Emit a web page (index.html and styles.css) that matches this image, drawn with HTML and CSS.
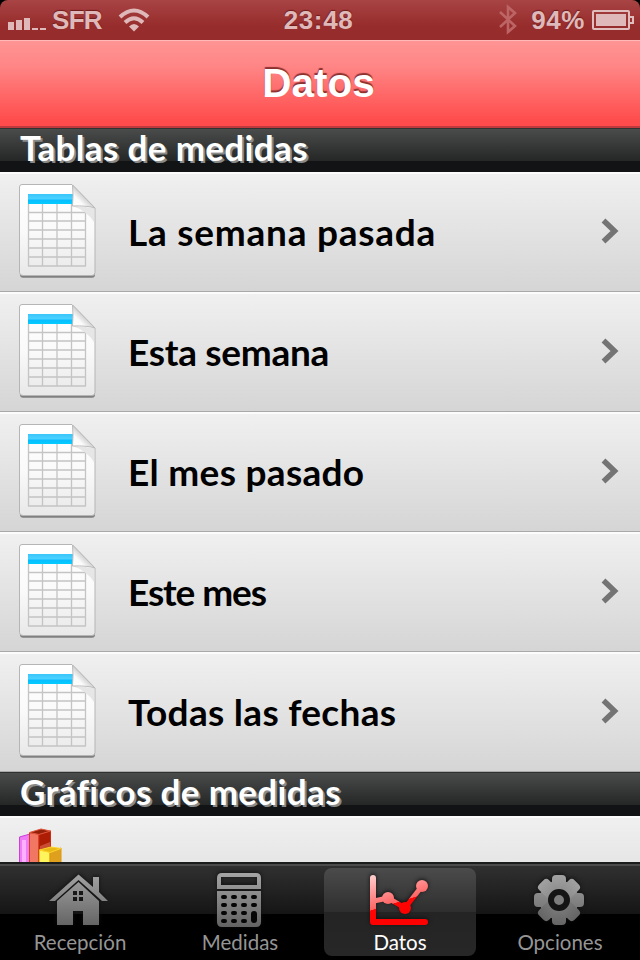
FILE: index.html
```html
<!DOCTYPE html>
<html lang="es">
<head>
    <meta charset="UTF-8">
    <meta name="viewport" content="width=device-width, initial-scale=1.0">
    <title>Datos</title>
    <link rel="stylesheet" href="styles.css">
</head>
<body>

    <!-- Iconos compartidos -->
    <svg class="defs" width="0" height="0">
        <defs>
            <linearGradient id="paper" x1="0" y1="0" x2="0" y2="1">
                <stop offset="0" stop-color="#fff"/>
                <stop offset=".5" stop-color="#fafafa"/>
                <stop offset="1" stop-color="#e8e8e8"/>
            </linearGradient>
            <linearGradient id="fold" x1="0" y1="1" x2="1" y2="0">
                <stop offset="0" stop-color="#fff"/>
                <stop offset=".3" stop-color="#fbfbfb"/>
                <stop offset=".5" stop-color="#d2d2d2"/>
                <stop offset=".6" stop-color="#fff"/>
            </linearGradient>
            <linearGradient id="blue" x1="0" y1="0" x2="0" y2="1">
                <stop offset="0" stop-color="#39c5fb"/>
                <stop offset=".5" stop-color="#4bd2ff"/>
                <stop offset=".6" stop-color="#08bcff"/>
                <stop offset="1" stop-color="#04ccff"/>
            </linearGradient>
            <linearGradient id="gray" gradientUnits="userSpaceOnUse" x1="0" y1="0" x2="0" y2="56">
                <stop offset="0" stop-color="#a4a4a4"/>
                <stop offset="1" stop-color="#606060"/>
            </linearGradient>
            <linearGradient id="red" gradientUnits="userSpaceOnUse" x1="0" y1="0" x2="14" y2="46">
                <stop offset="0" stop-color="#ffd8d8"/>
                <stop offset=".75" stop-color="#ff6464"/>
                <stop offset=".76" stop-color="#ff0505"/>
                <stop offset="1" stop-color="#f00"/>
            </linearGradient>
        </defs>
        <symbol id="sheet" viewBox="0 0 80 98">
            <path d="M4 2H55L77 25V91Q77 94 74 94H5Q2 94 2 91V5Q2 2 4 2Z" fill="#808080" transform="translate(0 .8)"/>
            <path d="M4 1.500H54L77 25V89.500Q77 92.500 74 92.500H5Q1.500 92.500 1.500 89.500V4Q1.500 1.500 4 1.500Z" fill="url(#paper)" stroke="#b5b5b5"/>
            <path d="M10.500 21V83M24.500 21V83M39 21V83M53.500 21V83M67.500 24V83M10 29.500H68M10 38H68M10 47H68M10 56H68M10 65H68M10 74H68M10 83H68" stroke="#c4c4c4" stroke-width="1.300" fill="none"/>
            <rect x="10" y="11" width="45" height="10" fill="url(#blue)"/>
            <path d="M54 23L76 25V39Q68 27 54 23Z" fill="#e6e6e6"/>
            <path d="M54.500 2L77 25Q70 22.500 54.500 23Q55.500 12 54.500 2Z" fill="url(#fold)" stroke="#bbb"/>
        </symbol>
        <symbol id="chevron" viewBox="0 0 18 26">
            <path d="M2.500 2.500L13.500 13L2.500 23.500" fill="none" stroke="#747474" stroke-width="5.500"/>
        </symbol>
    </svg>

    <div class="screen">
        <div class="status-bar">
            <div class="carrier">
                <svg width="40" height="14" viewBox="0 0 40 14" fill="#dfb9b9">
                    <path d="M0 6H6V14H0ZM8 4H14V14H8ZM16 2H22V14H16ZM24 12H30V14H24ZM32 12H38V14H32Z"/>
                </svg>
                <span class="operator">SFR</span>
                <svg class="wifi" width="32" height="24" viewBox="0 0 32 24">
                    <path d="M2 9Q16 -4 30 9M7 14.500Q16 6 25 14.500" fill="none" stroke="#dfb9b9" stroke-width="4"/>
                    <path d="M11 18.500Q16 13.500 21 18.500L16 23.500Z" fill="#dfb9b9"/>
                </svg>
            </div>
            <span class="clock">23:48</span>
            <div class="battery">
                <svg class="bluetooth" width="18" height="32" viewBox="0 0 18 32">
                    <path d="M1 8L16 22L9 28V3L16 9L1 23" fill="none" stroke="#bd6565" stroke-width="2.600"/>
                </svg>
                <span class="percent">94%</span>
                <svg width="42" height="20" viewBox="0 0 42 20">
                    <rect x="1" y="1" width="36" height="18" rx="1" fill="none" stroke="#e1bebe" stroke-width="2"/>
                    <rect x="4" y="4" width="30" height="12" fill="#dfb9b9"/>
                    <path d="M37 7H41V13H37" fill="none" stroke="#e1bebe" stroke-width="2"/>
                </svg>
            </div>
        </div>

        <header class="nav-bar">
            <h1>Datos</h1>
        </header>

        <main>
            <h2>Tablas de medidas</h2>
            <ul>
                <li><svg class="icon"><use href="#sheet"/></svg><span class="label semana-pasada">La semana pasada</span><svg class="arrow"><use href="#chevron"/></svg></li>
                <li><svg class="icon"><use href="#sheet"/></svg><span class="label esta-semana">Esta semana</span><svg class="arrow"><use href="#chevron"/></svg></li>
                <li><svg class="icon"><use href="#sheet"/></svg><span class="label mes-pasado">El mes pasado</span><svg class="arrow"><use href="#chevron"/></svg></li>
                <li><svg class="icon"><use href="#sheet"/></svg><span class="label este-mes">Este mes</span><svg class="arrow"><use href="#chevron"/></svg></li>
                <li><svg class="icon"><use href="#sheet"/></svg><span class="label fechas">Todas las fechas</span><svg class="arrow"><use href="#chevron"/></svg></li>
            </ul>
            <h2>Gráficos de medidas</h2>
            <ul>
                <li>
                    <svg class="icon" viewBox="0 0 80 98">
                        <path d="M1.500 10L12 7V90H1.500Z" fill="#f07cf5" stroke="#cb3ed8"/>
                        <path d="M4 13H8V90H4Z" fill="#fdb0ff"/>
                        <path d="M11.500 6L21 7V90H11.500Z" fill="#f27762" stroke="#d83a20"/>
                        <path d="M21 7L32.500 4V90H21Z" fill="#ad1d05" stroke="#c92c12"/>
                        <path d="M22 19L32 15V24L22 22Z" fill="#c94d33"/>
                        <path d="M11.500 5.500L23 2L32.500 4L21 7.500Z" fill="#942009" stroke="#e1563c"/>
                        <path d="M21.500 23L32 25V90H21.500Z" fill="#fff45c" stroke="#e9bd16"/>
                        <path d="M32 25L43 21V90H32Z" fill="#dfa11d" stroke="#dd980c"/>
                        <path d="M21.500 23L33 20L43 21.500L32 25.500Z" fill="#e9b918" stroke="#ffd52a"/>
                    </svg>
                    <span class="label semana-pasada">La semana pasada</span>
                </li>
            </ul>
        </main>

        <nav class="tab-bar">
            <a class="tab">
                <svg width="60" height="56" viewBox="0 0 60 56" fill="url(#gray)">
                    <path d="M0 28L29.500 1.500L44 14V4H50V19L59 28H53L29.500 7L6 28Z"/>
                    <path fill-rule="evenodd" d="M8 28L29.500 9L50 28V52H34V38H24V52H8ZM24 18V22H28V18ZM30 18V22H34V18ZM24 24V28H28V24ZM30 24V28H34V24Z"/>
                </svg>
                <span>Recepción</span>
            </a>
            <a class="tab">
                <svg width="44" height="56" viewBox="0 0 44 56" fill="url(#gray)">
                    <path fill-rule="evenodd" d="M0 16V5Q0 0 5 0H39Q44 0 44 5V16ZM4 4V12H40V4Z"/>
                    <path d="M0 18H44V49Q44 54 39 54H5Q0 54 0 49Z"/>
                    <path d="M6 24H8M16 24H18M26 24H28M36 24H38M6 32H8M16 32H18M26 32H28M36 32H38M6 40H8M16 40H18M26 40H28M6 48H8M16 48H18M26 48H28" stroke="#060606" stroke-width="4" stroke-linecap="round"/>
                    <path d="M37 41V47" stroke="#060606" stroke-width="6" stroke-linecap="round"/>
                </svg>
                <span>Medidas</span>
            </a>
            <a class="tab active">
                <svg width="60" height="56" viewBox="0 0 60 56">
                    <path d="M4 5V49H56" fill="none" stroke="url(#red)" stroke-width="6" stroke-linecap="round" stroke-linejoin="round"/>
                    <path d="M5 28L19 25L36 35L53 13" fill="none" stroke="url(#red)" stroke-width="5"/>
                    <circle cx="19" cy="25" r="6" fill="url(#red)"/>
                    <circle cx="36" cy="35" r="6" fill="url(#red)"/>
                    <circle cx="53" cy="13" r="6" fill="url(#red)"/>
                </svg>
                <span>Datos</span>
            </a>
            <a class="tab">
                <svg width="50" height="56" viewBox="0 0 50 56">
                    <g fill="url(#gray)">
                        <circle cx="25" cy="27" r="19.500"/>
                        <rect x="18" y="2" width="14" height="50" rx="4"/>
                        <rect x="0" y="20" width="50" height="14" rx="4"/>
                        <rect x="18" y="2" width="14" height="50" rx="4" transform="rotate(45 25 27)"/>
                        <rect x="18" y="2" width="14" height="50" rx="4" transform="rotate(-45 25 27)"/>
                    </g>
                    <circle cx="25" cy="27" r="8" fill="#7d7d7d" stroke="#141414" stroke-width="6"/>
                </svg>
                <span>Opciones</span>
            </a>
        </nav>
    </div>

</body>
</html>
```
FILE: styles.css
```css
body {
    margin: 0;
    background-color: #000;
    font-family: Lato, "Liberation Sans", sans-serif;
}

.defs {
    position: absolute;
}

.screen {
    width: 640px;
    height: 960px;
    display: flex;
    flex-direction: column;
    overflow: hidden;
}

/* Barra de estado */
.status-bar {
    flex: none;
    height: 40px;
    box-sizing: border-box;
    padding: 0 6px 0 8px;
    display: grid;
    grid-template-columns: 1fr auto 1fr;
    align-items: center;
    border-radius: 8px 8px 0 0;
    background: linear-gradient(#a84444, #972c2c 65%, #962c2c);
    color: #dfb9b9;
    font: bold 26px/40px "Liberation Sans", Arial, sans-serif;
    text-shadow: 0 -1px 1px #6d1c1c;
}

.carrier, .battery {
    display: flex;
    align-items: center;
}

.carrier svg:first-child {
    margin-top: 6px;
}

.operator {
    margin-left: 4px;
    letter-spacing: -0.7px;
}

.wifi {
    margin-left: 16px;
}

.clock {
    margin-right: 5px;
    letter-spacing: 0.6px;
}

.battery {
    justify-content: flex-end;
}

.percent {
    margin: 0 7px 0 14px;
    letter-spacing: 0.6px;
}

/* Barra de título */
.nav-bar {
    flex: none;
    height: 88px;
    box-sizing: border-box;
    padding-right: 3px;
    border-top: 1px solid #ffb9b9;
    border-bottom: 2px solid #be3a3c;
    background: linear-gradient(#ff9494, #ff8585 30%, #ff4b4b 95%);
}

h1 {
    margin: 0;
    color: #fff;
    font: bold 40.5px/84px "Liberation Sans", Arial, sans-serif;
    text-align: center;
    text-shadow: 0 -2px 1px #8c3030;
}

main {
    height: 734px;
    flex: none;
    overflow: hidden;
}

h2 {
    margin: 0;
    height: 44px;
    box-sizing: border-box;
    padding-left: 20px;
    border-top: 1px solid #303232;
    background: linear-gradient(#4a4c4c, #242726 32px, #121315 32px);
    color: #fff;
    font-size: 35px;
    font-weight: bold;
    line-height: 36px;
    letter-spacing: 0.35px;
    white-space: nowrap;
    text-shadow: 2px 2px 0 #898a8a;
}

ul {
    margin: 0;
    padding: 0;
    list-style: none;
}

li {
    height: 120px;
    box-sizing: border-box;
    padding: 0 20px 2px 18px;
    display: flex;
    align-items: center;
    border-top: 2px solid #fcfcfc;
    border-bottom: 1px solid #a9a9a9;
    background: linear-gradient(#f0f0f0, #d5d5d5);
}

.icon {
    width: 80px;
    height: 98px;
    flex: none;
}

.label {
    flex: 1;
    margin-left: 30px;
    color: #000;
    font-size: 37px;
    font-weight: bold;
    line-height: 50px;
    white-space: nowrap;
}

.semana-pasada {
    letter-spacing: 0.75px;
}

.esta-semana {
    letter-spacing: -0.3px;
}

.mes-pasado {
    letter-spacing: 0.3px;
}

.este-mes {
    letter-spacing: -1.1px;
}

.fechas {
    letter-spacing: 0.3px;
}

.arrow {
    width: 18px;
    height: 26px;
    margin: 0 1px 2px 0;
}

/* Barra de pestañas */
.tab-bar {
    height: 98px;
    flex: none;
    box-sizing: border-box;
    padding: 3px 4px 4px;
    display: grid;
    grid-template-columns: 152px 152px 152px 152px;
    column-gap: 8px;
    border-top: 2px solid #1b1c1c;
    background: linear-gradient(#4b4b4b 2px, #303030 2px, #151515 50px, #000 50px);
}

.tab {
    height: 88px;
    margin-top: 1px;
    display: flex;
    flex-direction: column;
    align-items: center;
    border-radius: 8px;
    color: #959595;
    font-size: 20.5px;
    line-height: 26px;
}

.tab svg {
    margin: 5px 2px 0 0;
    flex: none;
    filter: drop-shadow(0 -1px 2px #111);
}

.tab.active {
    background: linear-gradient(#4b4b4b, #2e2e2e 44px, #242424 44px, #272727);
    color: #fff;
}
```
